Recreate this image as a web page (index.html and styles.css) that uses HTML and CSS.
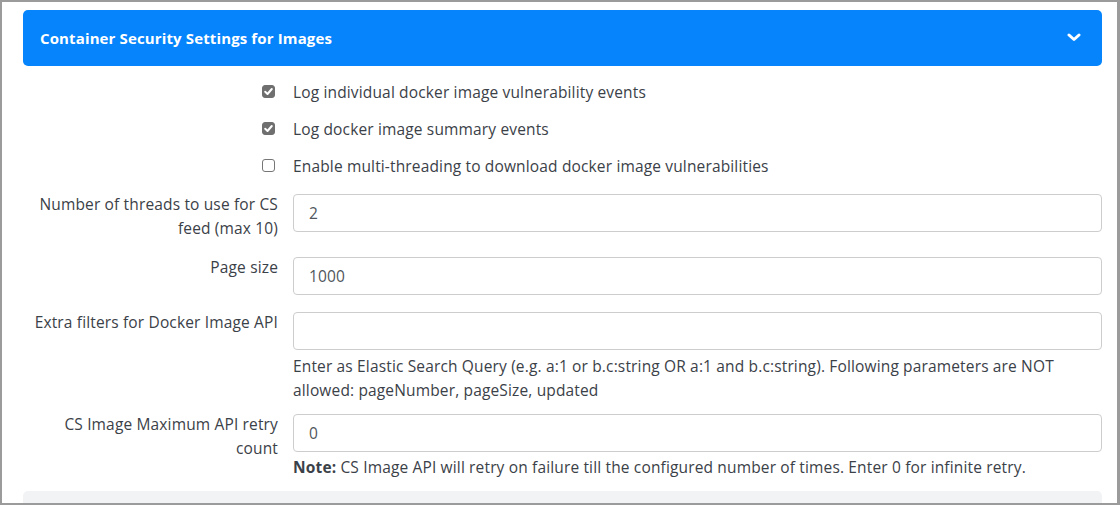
FILE: index.html
```html
<!DOCTYPE html>
<html>
<head>
<meta charset="utf-8">
<link rel="stylesheet" href="styles.css">
</head>
<body>
<div class="frame">
  <div class="panel-header">
    <span class="panel-title">Container Security Settings for Images</span>
    <svg class="chevron" width="14" height="9" viewBox="0 0 14 9"><polyline points="2,2 7,6.5 12,2" fill="none" stroke="#fff" stroke-width="3" stroke-linecap="round" stroke-linejoin="round"/></svg>
  </div>
  <div class="form">
    <div class="check-row">
      <div class="label-col"><span class="cb checked"><svg width="13" height="13" viewBox="0 0 13 13"><polyline points="3.2,6.8 5.5,9 9.8,4" fill="none" stroke="#fff" stroke-width="2" stroke-linecap="round" stroke-linejoin="round"/></svg></span></div>
      <div class="field-col">Log individual docker image vulnerability events</div>
    </div>
    <div class="check-row">
      <div class="label-col"><span class="cb checked"><svg width="13" height="13" viewBox="0 0 13 13"><polyline points="3.2,6.8 5.5,9 9.8,4" fill="none" stroke="#fff" stroke-width="2" stroke-linecap="round" stroke-linejoin="round"/></svg></span></div>
      <div class="field-col">Log docker image summary events</div>
    </div>
    <div class="check-row">
      <div class="label-col"><span class="cb"></span></div>
      <div class="field-col">Enable multi-threading to download docker image vulnerabilities</div>
    </div>

    <div class="row first">
      <label class="label-col">Number of threads to use for CS feed (max 10)</label>
      <div class="field-col"><input class="input" type="text" value="2"></div>
    </div>
    <div class="row">
      <label class="label-col">Page size</label>
      <div class="field-col"><input class="input" type="text" value="1000"></div>
    </div>
    <div class="row has-help">
      <label class="label-col">Extra filters for Docker Image API</label>
      <div class="field-col">
        <input class="input" type="text" value="">
        <div class="help">Enter as Elastic Search Query (e.g. a:1 or b.c:string OR a:1 and b.c:string). Following parameters are NOT allowed: pageNumber, pageSize, updated</div>
      </div>
    </div>
    <div class="row last">
      <label class="label-col">CS Image Maximum API retry count</label>
      <div class="field-col">
        <input class="input" type="text" value="0">
        <div class="note"><b>Note:</b> CS Image API will retry on failure till the configured number of times. Enter 0 for infinite retry.</div>
      </div>
    </div>
  </div>
  <div class="footer-bar"></div>
</div>
</body>
</html>
```

FILE: styles.css
```css
html, body {
  margin: 0;
  padding: 0;
  background: #fff;
}
body {
  font-family: "Open Sans", Lato, sans-serif;
  font-size: 15.5px;
  letter-spacing: 0.15px;
  color: #3b4148;
}
.frame {
  width: 1120px;
  height: 505px;
  box-sizing: border-box;
  border: 2px solid #9b9b9b;
  border-right-width: 3px;
  padding: 8px 15px 0 21px;
  overflow: hidden;
}
.panel-header {
  height: 56px;
  background: #0584fc;
  border-radius: 5px;
  display: flex;
  align-items: center;
  justify-content: space-between;
  padding: 0 21px 0 17px;
  color: #fff;
}
.panel-title {
  font-weight: 700;
  font-size: 15px;
  letter-spacing: 0.13px;
}
.chevron {
  display: block;
  margin-top: -2px;
}
.form {
  margin-top: 7px;
}
.check-row {
  display: flex;
  align-items: center;
  height: 37px;
  gap: 15px;
}
.label-col {
  width: 255px;
  flex: none;
  text-align: right;
  box-sizing: border-box;
}
.check-row .label-col {
  display: flex;
  justify-content: flex-end;
  padding-right: 3px;
}
.field-col {
  flex: 1;
  min-width: 0;
}
.cb {
  width: 13px;
  height: 13px;
  box-sizing: border-box;
  border: 1px solid #767676;
  border-radius: 3px;
  background: #fff;
  display: block;
  position: relative;
}
.cb.checked {
  background: #6f6f6f;
  border-color: #6f6f6f;
}
.cb svg {
  position: absolute;
  left: -1px;
  top: -1px;
}
.row {
  display: flex;
  align-items: flex-start;
  gap: 15px;
  margin-bottom: 15px;
}
.row.first {
  margin-top: 8px;
}
.row.has-help {
  margin-bottom: 10px;
}
.row.last {
  margin-bottom: 0;
}
.row .label-col {
  line-height: 24px;
  padding-left: 10px;
}
.input {
  display: block;
  width: 100%;
  height: 38px;
  box-sizing: border-box;
  margin: 2px 0 0 0;
  border: 1px solid #cdcdcd;
  border-radius: 4px;
  padding: 0 15px;
  font-family: inherit;
  font-size: 15.5px;
  letter-spacing: 0.15px;
  color: #50565c;
  background: #fff;
  outline: none;
}
.help {
  margin-top: 4px;
  line-height: 24px;
}
.note {
  margin-top: 3px;
  line-height: 24px;
}
.note b {
  font-weight: 700;
}
.footer-bar {
  margin-top: 12px;
  height: 30px;
  background: #f2f3f5;
  border-radius: 5px 5px 0 0;
}
```
